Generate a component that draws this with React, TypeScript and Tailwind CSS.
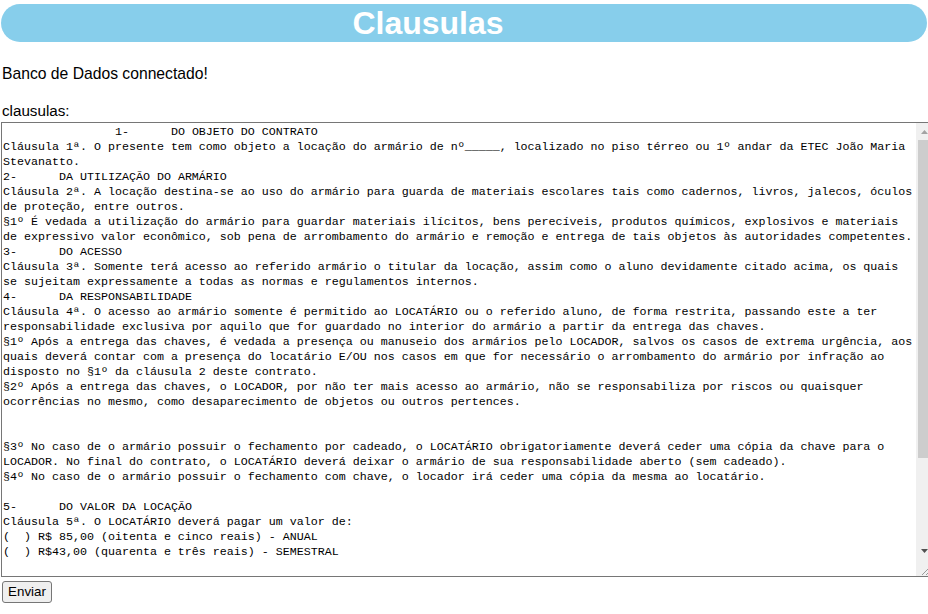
import React from 'react';

const clausulas = [
  '\t\t1-\tDO OBJETO DO CONTRATO',
  'Cláusula 1ª. O presente tem como objeto a locação do armário de nº_____, localizado no piso térreo ou 1º andar da ETEC João Maria',
  'Stevanatto.',
  '2-\tDA UTILIZAÇÃO DO ARMÁRIO',
  'Cláusula 2ª. A locação destina-se ao uso do armário para guarda de materiais escolares tais como cadernos, livros, jalecos, óculos',
  'de proteção, entre outros.',
  '§1º É vedada a utilização do armário para guardar materiais ilícitos, bens perecíveis, produtos químicos, explosivos e materiais',
  'de expressivo valor econômico, sob pena de arrombamento do armário e remoção e entrega de tais objetos às autoridades competentes.',
  '3-\tDO ACESSO',
  'Cláusula 3ª. Somente terá acesso ao referido armário o titular da locação, assim como o aluno devidamente citado acima, os quais',
  'se sujeitam expressamente a todas as normas e regulamentos internos.',
  '4-\tDA RESPONSABILIDADE',
  'Cláusula 4ª. O acesso ao armário somente é permitido ao LOCATÁRIO ou o referido aluno, de forma restrita, passando este a ter',
  'responsabilidade exclusiva por aquilo que for guardado no interior do armário a partir da entrega das chaves.',
  '§1º Após a entrega das chaves, é vedada a presença ou manuseio dos armários pelo LOCADOR, salvos os casos de extrema urgência, aos',
  'quais deverá contar com a presença do locatário E/OU nos casos em que for necessário o arrombamento do armário por infração ao',
  'disposto no §1º da cláusula 2 deste contrato.',
  '§2º Após a entrega das chaves, o LOCADOR, por não ter mais acesso ao armário, não se responsabiliza por riscos ou quaisquer',
  'ocorrências no mesmo, como desaparecimento de objetos ou outros pertences.',
  '',
  '',
  '§3º No caso de o armário possuir o fechamento por cadeado, o LOCATÁRIO obrigatoriamente deverá ceder uma cópia da chave para o',
  'LOCADOR. No final do contrato, o LOCATÁRIO deverá deixar o armário de sua responsabilidade aberto (sem cadeado).',
  '§4º No caso de o armário possuir o fechamento com chave, o locador irá ceder uma cópia da mesma ao locatário.',
  '',
  '5-\tDO VALOR DA LOCAÇÃO',
  'Cláusula 5ª. O LOCATÁRIO deverá pagar um valor de:',
  '(  ) R$ 85,00 (oitenta e cinco reais) - ANUAL',
  '(  ) R$43,00 (quarenta e três reais) - SEMESTRAL',
  '',
  '6-\tDURAÇÃO DO CONTRATO',
].join('\n');

function Scrollbar() {
  return (
    <div className="w-[17px] shrink-0 bg-[#f0f0f0] flex flex-col">
      <div className="h-[17px] flex items-center justify-center">
        <svg width="7" height="4" viewBox="0 0 7 4">
          <path d="M3.5 0 L7 4 L0 4 Z" fill="#a3a3a3" />
        </svg>
      </div>
      <div className="mx-[2px] h-[318px] bg-[#cdcdcd]" />
      <div className="flex-1" />
      <div className="h-[17px] flex items-center justify-center">
        <svg width="7" height="4" viewBox="0 0 7 4">
          <path d="M0 0 L7 0 L3.5 4 Z" fill="#505050" />
        </svg>
      </div>
      <div className="h-[17px] bg-[#f0f0f0] flex items-end justify-start">
        <svg width="17" height="17" viewBox="0 0 17 17">
          <path d="M6 16 L12 10 M10 16 L12 14" stroke="#9a9a9a" strokeWidth="1" />
        </svg>
      </div>
    </div>
  );
}

export default function App() {
  return (
    <div className="w-[928px] h-[614px] overflow-hidden bg-white text-black font-['Liberation_Sans',Arial,sans-serif] text-[16px]">
      <div className="mx-[1px] mt-[4px] h-[38px] rounded-full bg-[#87ceeb] flex items-center justify-center pr-[72px]">
        <h1 className="text-[32px] font-bold text-white leading-none">Clausulas</h1>
      </div>

      <p className="mt-[23px] pl-[2px] leading-[18px] text-[15.7px]">Banco de Dados connectado!</p>
      <p className="mt-[19px] pl-[2px] leading-[18px] text-[15.2px]">clausulas:</p>

      <div className="mt-[2px] ml-[1px] w-[933px] h-[455px] border border-[#767676] flex">
        <pre className="flex-1 overflow-hidden pl-[1px] pt-[2px] whitespace-pre [tab-size:8] font-['Liberation_Mono',monospace] text-[11.67px] leading-[15px] text-black">
          {clausulas}
        </pre>
        <Scrollbar />
      </div>

      <button className="mt-[4px] ml-[2px] w-[50px] h-[22px] bg-[#efefef] border border-[#767676] rounded-[3px] text-[13.33px] font-['Liberation_Sans',Arial,sans-serif] text-black leading-none">
        Enviar
      </button>
    </div>
  );
}
